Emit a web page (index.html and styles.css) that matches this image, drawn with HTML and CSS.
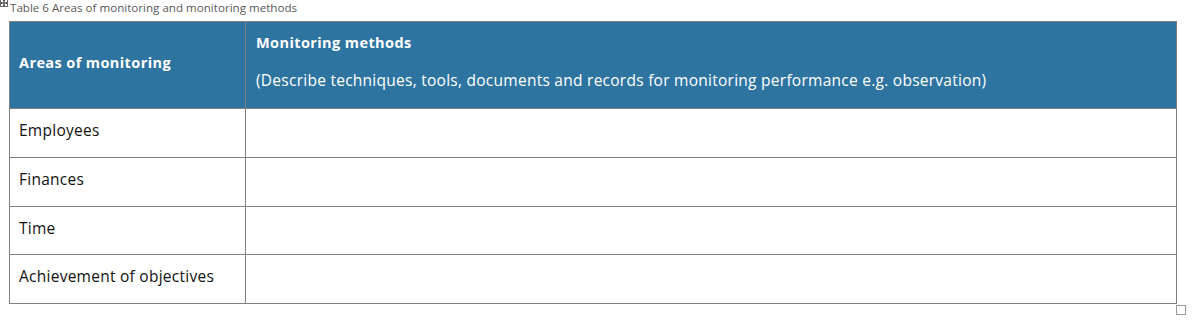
FILE: index.html
```html
<!DOCTYPE html>
<html>
<head>
<meta charset="utf-8">
<link rel="stylesheet" href="styles.css">
</head>
<body>
<div class="page">
  <div class="caption-row">
    <span class="move-handle">
      <svg width="8" height="8" viewBox="0 0 8 8">
        <path d="M4 1V7M1 4H7" stroke="#333" stroke-width="1" fill="none"/>
        <path d="M3 2L4 1L5 2M3 6L4 7L5 6M2 3L1 4L2 5M6 3L7 4L6 5" stroke="#333" stroke-width="0.8" fill="none"/>
      </svg>
    </span>
    <span class="caption">Table 6 Areas of monitoring and monitoring methods</span>
  </div>
  <table class="grid">
    <colgroup>
      <col class="c1">
      <col class="c2">
    </colgroup>
    <thead>
      <tr class="head">
        <th class="h-left">Areas of monitoring</th>
        <th class="h-right">
          <p class="h-title">Monitoring methods</p>
          <p class="h-desc">(Describe techniques, tools, documents and records for monitoring performance e.g. observation)</p>
        </th>
      </tr>
    </thead>
    <tbody>
      <tr><td class="first">Employees</td><td></td></tr>
      <tr><td class="first">Finances</td><td></td></tr>
      <tr><td class="first">Time</td><td></td></tr>
      <tr><td class="first">Achievement of objectives</td><td></td></tr>
    </tbody>
  </table>
  <div class="resize-row"><span class="resize-handle"></span></div>
</div>
</body>
</html>
```
FILE: styles.css
```css
html, body {
  margin: 0;
  padding: 0;
  background: #ffffff;
}
body {
  font-family: "Open Sans", Lato, sans-serif;
  color: #111111;
}
.page {
  width: 1203px;
  height: 329px;
  overflow: hidden;
}
.caption-row {
  display: flex;
  align-items: flex-start;
  height: 21px;
}
.move-handle {
  display: block;
  width: 8px;
  height: 8px;
  margin-top: -1px;
  border: 1px solid #6b6b6b;
  box-sizing: border-box;
  background: #fff;
  line-height: 0;
  flex: none;
}
.move-handle svg {
  display: block;
  margin: -1px 0 0 -1px;
}
.caption {
  margin-left: 2px;
  margin-top: 1px;
  font-size: 11.6px;
  line-height: 14px;
  color: #595959;
}
.grid {
  margin-left: 9px;
  border-collapse: collapse;
  width: 1167px;
  table-layout: fixed;
}
.c1 { width: 236px; }
.c2 { width: 931px; }
.grid th, .grid td {
  border: 1px solid #7f7f7f;
  padding: 0 10px;
  text-align: left;
  vertical-align: top;
  font-size: 15.5px;
  letter-spacing: 0.26px;
  line-height: 18px;
}
.head th {
  background: #2e74a0;
  color: #ffffff;
  height: 87px;
  box-sizing: border-box;
}
.h-left {
  vertical-align: middle !important;
  font-weight: 700;
  font-size: 14.5px !important;
  letter-spacing: 0.4px !important;
  padding-left: 9px !important;
  padding-bottom: 4px !important;
}
.h-right {
  padding-top: 12px !important;
}
.h-right p {
  margin: 0;
}
.h-title {
  font-weight: 700;
  font-size: 14.5px;
  letter-spacing: 0.4px;
}
.h-desc {
  font-weight: 400;
  padding-top: 19px;
}
.grid tbody td {
  height: 48.75px;
  box-sizing: border-box;
  padding-top: 12px;
}
.grid tbody td.first {
  padding-left: 9px;
}
.resize-row {
  display: flex;
  justify-content: flex-end;
  width: 1186px;
}
.resize-handle {
  display: block;
  width: 10px;
  height: 10px;
  margin-top: 1px;
  border: 1px solid #9a9a9a;
  box-sizing: border-box;
}
```
